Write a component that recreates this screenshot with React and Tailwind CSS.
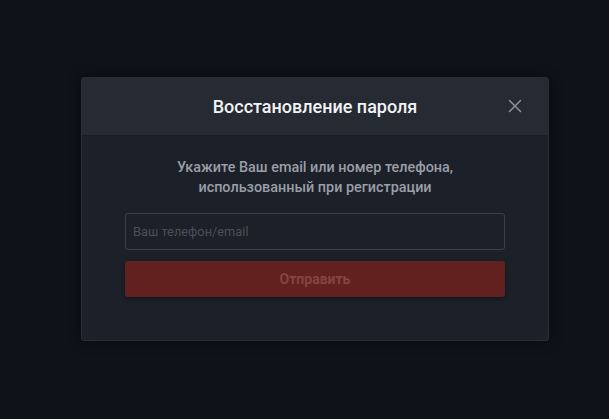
export default function App() {
  return (
    <div className="w-[609px] h-[419px] bg-[#0f1218] font-['Roboto',sans-serif] pt-[77px] pl-[81px]">
      <div className="w-[468px] rounded-[3px] bg-[#1c2029] border border-[#2a2e37] shadow-[0_0_12px_rgba(0,0,0,0.5)] overflow-hidden">
        <div className="relative h-[58px] bg-[#262a33] border-b border-[#1a1d24] flex items-center justify-center">
          <h2 className="text-[18px] font-medium text-[#f2f3f5]">Восстановление пароля</h2>
          <button className="absolute right-[26px] top-[21px] text-[#8d919a]">
            <svg width="14" height="14" viewBox="0 0 14 14" fill="none" stroke="currentColor" strokeWidth="1.5" strokeLinecap="round">
              <path d="M1.5 1.5 L12.5 12.5 M12.5 1.5 L1.5 12.5" />
            </svg>
          </button>
        </div>
        <div className="px-[43px] pt-[22px] pb-[43px]">
          <p className="text-center text-[14.4px] leading-[20px] font-medium text-[#9a9ea7]">
            Укажите Ваш email или номер телефона,
            <br />
            использованный при регистрации
          </p>
          <input
            type="text"
            placeholder="Ваш телефон/email"
            className="mt-[15px] block w-full h-[37px] rounded-[3px] border border-[#3b404a] bg-transparent px-[7px] text-[12.8px] text-[#d0d3d8] placeholder:text-[#4a4f58] outline-none"
          />
          <button className="mt-[11px] w-full h-[36px] rounded-[3px] bg-[#62201f] text-[14px] font-bold text-[#86443f] shadow-[0_2px_4px_rgba(0,0,0,0.35)]">
            Отправить
          </button>
        </div>
      </div>
    </div>
  );
}
